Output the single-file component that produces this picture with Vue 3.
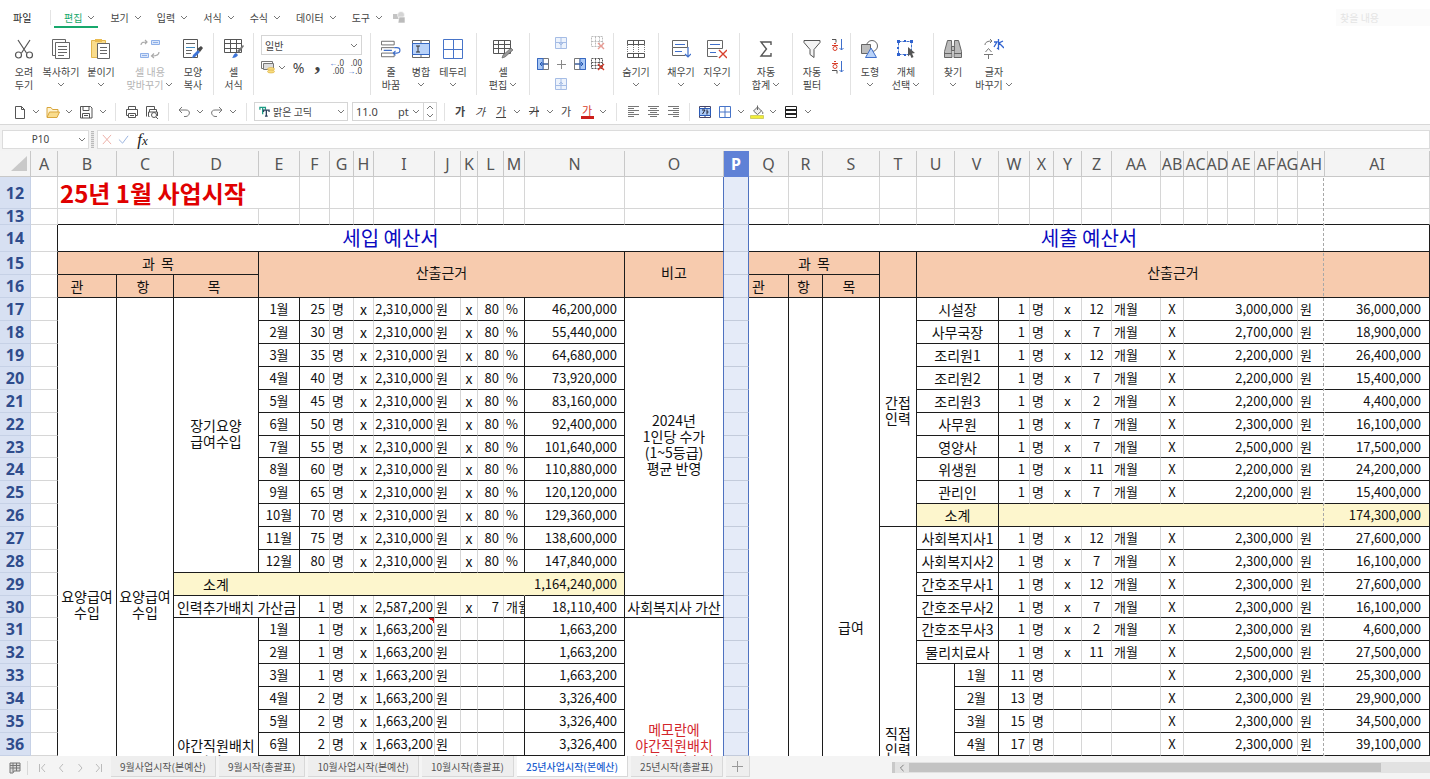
<script setup>
import { h } from 'vue'

const Chev = () =>
  h('svg', { class: 'chev', viewBox: '0 0 8 5', 'aria-hidden': 'true' }, [
    h('path', { d: 'M1 1 L4 4 L7 1', fill: 'none', stroke: '#777', 'stroke-width': '1' }),
  ])

const menus = ['편집', '보기', '입력', '서식', '수식', '데이터', '도구']

const columns = [
  ['A', 27], ['B', 59], ['C', 57], ['D', 85], ['E', 41], ['F', 30], ['G', 24], ['H', 20],
  ['I', 61], ['J', 26], ['K', 17], ['L', 26], ['M', 21], ['N', 100], ['O', 99], ['P', 25],
  ['Q', 40], ['R', 34], ['S', 57], ['T', 37], ['U', 38], ['V', 44], ['W', 31], ['X', 24],
  ['Y', 28], ['Z', 30], ['AA', 49], ['AB', 23], ['AC', 24], ['AD', 20], ['AE', 27],
  ['AF', 23], ['AG', 20], ['AH', 27], ['AI', 0],
]

const cell = (t = '', c = '', cs = 1, rs = 1) => ({ t, c, cs, rs })
const blanks = (n, c) => Array.from({ length: n }, () => cell('', c))

const income = [
  [25, '46,200,000'], [30, '55,440,000'], [35, '64,680,000'], [40, '73,920,000'],
  [45, '83,160,000'], [50, '92,400,000'], [55, '101,640,000'], [60, '110,880,000'],
  [65, '120,120,000'], [70, '129,360,000'], [75, '138,600,000'], [80, '147,840,000'],
]
const night = [
  [1, '1,663,200'], [1, '1,663,200'], [1, '1,663,200'],
  [2, '3,326,400'], [2, '3,326,400'], [2, '3,326,400'],
]
const staff = {
  17: ['시설장', 12, '3,000,000', '36,000,000'],
  18: ['사무국장', 7, '2,700,000', '18,900,000'],
  19: ['조리원1', 12, '2,200,000', '26,400,000'],
  20: ['조리원2', 7, '2,200,000', '15,400,000'],
  21: ['조리원3', 2, '2,200,000', '4,400,000'],
  22: ['사무원', 7, '2,300,000', '16,100,000'],
  23: ['영양사', 7, '2,500,000', '17,500,000'],
  24: ['위생원', 11, '2,200,000', '24,200,000'],
  25: ['관리인', 7, '2,200,000', '15,400,000'],
  27: ['사회복지사1', 12, '2,300,000', '27,600,000'],
  28: ['사회복지사2', 7, '2,300,000', '16,100,000'],
  29: ['간호조무사1', 12, '2,300,000', '27,600,000'],
  30: ['간호조무사2', 7, '2,300,000', '16,100,000'],
  31: ['간호조무사3', 2, '2,300,000', '4,600,000'],
  32: ['물리치료사', 11, '2,500,000', '27,500,000'],
}
const carers = [
  [11, '25,300,000'], [13, '29,900,000'], [15, '34,500,000'], [17, '39,100,000'],
]

function leftCells(r) {
  const out = []
  if (r === 17) {
    out.push(cell('요양급여\n수입', 'lab bk rk', 1, 27), cell('요양급여\n수입', 'lab bk rk', 1, 27))
    out.push(cell('장기요양\n급여수입', 'lab bk rk', 1, 12))
  }
  if (r <= 28) {
    const [n, sum] = income[r - 17]
    out.push(
      cell(`${r - 16}월`, 'c bk rk'), cell(n, 'r5 bk'), cell('명', 'l bk'), cell('x', 'x bk'),
      cell('2,310,000', 'r2 bk'), cell('원', 'l1 bk'), cell('x', 'x bk'), cell(80, 'r4 bk'),
      cell('%', 'l bk rk'), cell(sum, 'r7 bk rk'),
    )
    if (r === 17) out.push(cell('2024년\n1인당 수가\n(1~5등급)\n평균 반영', 'lab bk blue', 1, 13))
  } else if (r === 29) {
    out.push(cell('소계', 'lab bk nr yel'), cell('', 'bk nr yel', 9), cell('1,164,240,000', 'r7 bk rk yel'))
  } else if (r === 30) {
    out.push(
      cell('인력추가배치 가산금', 'lab bk rk', 2), cell(1, 'r5 bk'), cell('명', 'l bk'), cell('x', 'x bk'),
      cell('2,587,200', 'r2 bk'), cell('원', 'l1 bk'), cell('x', 'x bk'), cell(7, 'r4 bk'),
      cell('개월', 'l clip bk rk'), cell('18,110,400', 'r7 bk rk'), cell('사회복지사 가산', 'lab bk blue'),
    )
  } else if (r <= 42) {
    if (r === 31) out.push(cell('야간직원배치\n가산금', 'lab bk rk', 1, 12))
    const d = night[r - 31]
    if (d) {
      out.push(
        cell(`${r - 30}월`, 'c bk rk'), cell(d[0], 'r5 bk'), cell('명', 'l bk'), cell('x', 'x bk'),
        cell('1,663,200', r === 31 ? 'r2 bk memo' : 'r2 bk'), cell('원', 'l1 bk'),
        ...blanks(2, 'bk'), cell('', 'bk rk'), cell(d[1], 'r7 bk rk'),
      )
    } else {
      out.push(cell('', 'bk rk'), ...blanks(7, 'bk'), cell('', 'bk rk'), cell('', 'bk rk'))
    }
    if (r === 31) out.push(cell('메모란에\n야간직원배치\n가산금 산출식\n\u00a0', 'lab red bk blue', 1, 12))
  } else if (r === 43) {
    out.push(cell('', 'bk', 11), cell('', 'bk blue'))
  } else {
    out.push(cell('', 'bk', 13), cell('', 'bk blue'))
  }
  return out
}

function rightCells(r) {
  const out = []
  if (r === 17) {
    out.push(cell('', 'rk bk', 1, 29), cell('', 'rk bk', 1, 29), cell('급여', 'lab rk bk', 1, 29))
    out.push(cell('간접\n인력', 'lab rk bk', 1, 10))
  }
  if (r === 27) out.push(cell('직접\n인력', 'lab rk bk', 1, 19))
  if (r === 26) {
    out.push(cell('소계', 'lab bk rk yel', 2), cell('', 'bk nr yel', 12), cell('174,300,000', 'r8 bk rk yel'))
  } else if (staff[r]) {
    const [name, months, pay, sum] = staff[r]
    out.push(
      cell(name, 'lab bk rk', 2), cell(1, 'r5 bk'), cell('명', 'l bk'), cell('x', 'c bk'),
      cell(months, 'c bk'), cell('개월', 'l bk'), cell('X', 'c bk'), cell(pay, 'r4 bk', 5),
      cell('원', 'l bk nr'), cell(sum, 'r8 bk rk'),
    )
  } else {
    if (r === 33) out.push(cell('', 'bk rk', 1, 13))
    const d = carers[r - 33]
    out.push(
      cell(d ? `${r - 32}월` : '', 'c bk rk'), cell(d ? d[0] : '', 'r5 bk'), cell(d ? '명' : '', 'l bk'),
      ...blanks(3, 'bk'), cell(d ? 'X' : '', 'c bk'), cell(d ? '2,300,000' : '', 'r4 bk', 5),
      cell(d ? '원' : '', 'l bk nr'), cell(d ? d[1] : '', 'r8 bk rk'),
    )
  }
  return out
}

const rows = [
  {
    n: 12, k: 'h12',
    cells: [cell(), cell('25년 1월 사업시작', 'headline', 4), ...blanks(9), cell('', 'blue'), cell('', 'sel'),
      ...blanks(17), cell('', 'nr'), cell()],
  },
  {
    n: 13, k: 'h13',
    cells: [cell(), ...blanks(13, 'bk'), cell('', 'bk blue'), cell('', 'sel'),
      ...blanks(17, 'bk'), cell('', 'bk nr'), cell('', 'bk')],
  },
  {
    n: 14, k: 'h14',
    cells: [cell('', 'rk'), cell('세입 예산서', 'title bk blue', 14), cell('', 'sel'), cell('세출 예산서', 'title bk rk', 19)],
  },
  {
    n: 15, k: '',
    cells: [cell('', 'rk'), cell('과\u00a0\u00a0목', 'lab bk rk hd', 3), cell('산출근거', 'lab bk rk hd', 10, 2),
      cell('비고', 'lab bk blue hd', 1, 2), cell('', 'sel'), cell('과\u00a0\u00a0목', 'lab bk rk hd', 3),
      cell('', 'bk rk hd', 1, 2), cell('산출근거', 'lab bk rk hd', 15, 2)],
  },
  {
    n: 16, k: '',
    cells: [cell('', 'rk'), cell('관', 'lab bk rk hd in'), cell('항', 'lab bk rk hd in2'), cell('목', 'lab bk rk hd in2'),
      cell('', 'sel'), cell('관', 'lab bk rk hd in'), cell('항', 'lab bk rk hd in2'), cell('목', 'lab bk rk hd in2')],
  },
]
for (let r = 17; r <= 45; r++) {
  rows.push({
    n: r <= 36 ? r : '',
    k: (r - 16) % 7 === 0 ? 'h22' : '',
    cells: [cell('', 'rk'), ...leftCells(r), cell('', 'sel'), ...rightCells(r)],
  })
}

const sheets = [
  '9월사업시작(본예산)', '9월시작(총괄표)', '10월사업시작(본예산)', '10월시작(총괄표)',
  '25년사업시작(본예산)', '25년시작(총괄표)',
]
const activeSheet = 4
</script>

<template>
  <div class="app">
    <nav class="menu" aria-label="메뉴">
      <button class="file">파일</button>
      <span class="msep"></span>
      <button v-for="(m, i) in menus" :key="m" class="mitem" :class="{ on: i === 0 }">{{ m }}<Chev /></button>
      <svg class="mini" viewBox="0 0 14 12"><rect x="1" y="3" width="6" height="5" fill="#c4c4c4" /><circle cx="9" cy="4" r="3.5" fill="#d4d4d4" stroke="#fff" stroke-width=".6" /><path d="M7 6h6v6H6z" fill="#bbb" stroke="#fff" stroke-width=".6" /></svg>
      <input class="find" type="search" placeholder="찾을 내용" aria-label="찾을 내용" />
    </nav>

    <div class="ribbon">
      <div class="grp g1">
        <button class="big w40">
          <svg viewBox="0 0 20 20"><g fill="none" stroke="#555" stroke-width="1.2"><path d="M4 1 12.500 14M16 1 7.500 14" /><circle cx="4.500" cy="16" r="3" /><circle cx="15.500" cy="16" r="3" /></g></svg>
          <span>오려</span><span>두기</span>
        </button>
        <button class="big w34">
          <svg viewBox="0 0 20 20"><g fill="#fff" stroke="#666"><path d="M1.500 .5h13v16h-13z" /><path d="M4.500 3.500h14v16h-14z" /><path d="M7 7.500h9M7 10.500h9M7 13.500h9M7 16.500h6" /></g></svg>
          <span>복사하기</span><Chev />
        </button>
        <button class="big w46">
          <svg viewBox="0 0 20 20"><path d="M.5 1.500h14v17H.5z" fill="#f9dc8c" stroke="#e2b64c" /><path d="M4 0h7v3H4z" fill="#eabb4e" /><path d="M6.500 4.500h12v15h-12z" fill="#fff" stroke="#666" /><path d="M9 8.500h7M9 11.500h7M9 14.500h7" stroke="#666" /></svg>
          <span>붙이기</span><Chev />
        </button>
        <button class="big w52 off" disabled>
          <svg viewBox="0 0 20 20"><g fill="none" stroke="#aaa" stroke-width="1.200"><path d="M1 6C1 3 4 3 7 3M5 1l2 2-2 2M19 13c0 3-2 4-7 4M14 14.500L11.500 17l2.500 2" /></g><g fill="#dbe7fa" stroke="#8fb0e8"><path d="M11.500 1.500h8v4h-8zM.5 14.500h8v4h-8z" /><path d="M13 3.500h5M2 16.500h5" /></g></svg>
          <span>셀 내용</span><span class="row">맞바꾸기<Chev /></span>
        </button>
        <button class="big w34">
          <svg viewBox="0 0 20 20"><path d="M.5 .5h14v18H.5z" fill="#fff" stroke="#555" /><path d="M3 4.500h9M3 11.500h6M3 14.500h5" stroke="#666" /><path d="M3 8.500h9" stroke="#3f8ac0" /><path d="M9 19l1-3 5-5 2 2-5 5z" fill="#3d74d8" /><path d="M14 10l4-3 2 2-3 4z" fill="#4a4a4a" /></svg>
          <span>모양</span><span>복사</span>
        </button>
      </div>
      <div class="grp">
        <button class="big w39">
          <svg viewBox="0 0 20 20"><path d="M.5 .5h17v13H.5zM.5 4.500h17M.5 9.500h17M6.500 .5v13M12.500 .5v13" fill="none" stroke="#555" /><path d="M13 12l6-6 1 1-5 7z" fill="#777" /><path d="M8 19c1 0 1-4 4-5l2 2c-1 2-3 3-6 3z" fill="#3d74d8" /></svg>
          <span>셀</span><span>서식</span>
        </button>
      </div>
      <div class="grp gfmt">
        <div class="selwrap">
          <select aria-label="표시 형식"><option>일반</option></select><Chev />
        </div>
        <div class="fmt">
          <button aria-label="통화"><svg viewBox="0 0 14 13" width="14" height="13"><path d="M.5.500h11v7H.5z" fill="#fff" stroke="#777" /><path d="M2.500 2.500h10v6h-10z" fill="#ddd" stroke="#777" /><ellipse cx="10" cy="8" rx="3.500" ry="1.500" fill="#f8dc80" stroke="#d8ac3c" stroke-width=".6" /><ellipse cx="10" cy="10.500" rx="3.500" ry="1.500" fill="#f8dc80" stroke="#d8ac3c" stroke-width=".6" /></svg></button>
          <Chev />
          <button class="pct" aria-label="백분율">%</button>
          <button class="comma" aria-label="쉼표">,</button>
          <button class="dec" aria-label="자릿수 늘림"><span><i>←</i>.0</span><span>.00</span></button>
          <button class="dec" aria-label="자릿수 줄임"><span>.00</span><span><i>→</i>.0</span></button>
        </div>
      </div>
      <div class="grp g4">
        <button class="big w40">
          <svg viewBox="0 0 22 20"><path d="M.5 1.500h14v4H.5zM.5 8.500h14M.5 18.500h14v-4H.5zM.5 8.500v3" fill="none" stroke="#666" /><path d="M14.500 8.500h3c4.500 0 4.500 6 0 6h-4M16 12l-2.500 2.500L16 17M3 11.500h9" fill="none" stroke="#3f6fcb" stroke-width="1.200" /></svg>
          <span>줄</span><span>바꿈</span>
        </button>
        <button class="big w20">
          <svg viewBox="0 0 20 20"><path d="M1.500 1.500h17v17h-17zM10 1.500v3M10 15.500v3" fill="#fff" stroke="#666" /><path d="M1.500 4.500h17v11h-17z" fill="#b9d2f8" stroke="#3668c2" /><path d="M5 7h4M7 7v6M5 13h4" stroke="#333" fill="none" /></svg>
          <span>병합</span><Chev />
        </button>
        <button class="big w44">
          <svg viewBox="0 0 20 20"><path d="M.5.500h19v19H.5zM10.500 .5v19M.5 10.500h19" fill="#fff" stroke="#4774c8" /></svg>
          <span>테두리</span><Chev />
        </button>
      </div>
      <div class="grp">
        <button class="big w52">
          <svg viewBox="0 0 20 20"><path d="M.5 1.500h17v13H.5zM.5 5.500h17M.5 9.500h17M5.500 1.500v13M11.500 1.500v13" fill="none" stroke="#555" /><path d="M9 19l1-3 8-7 2 2-8 7z" fill="#999" stroke="#555" stroke-width=".6" /></svg>
          <span>셀</span><span class="row">편집<Chev /></span>
        </button>
      </div>
      <div class="grp ins">
        <button class="p2 dim" aria-label="위에 줄 추가"><svg viewBox="0 0 12 12"><path d="M.5.500h11v11H.5zM.5 5.500h11M6 5v6" fill="#dce8fb" stroke="#4e7ccc" /><path d="M6 1v7M4 6l2 2 2-2" stroke="#4e7ccc" fill="none" /></svg></button>
        <button class="p3 dim" aria-label="줄 지우기"><svg viewBox="0 0 14 14"><path d="M.5.500h11v10H.5zM.5 5.500h11M4.500.500v10M8.500.500v10" fill="none" stroke="#777" stroke-dasharray="2 1" /><path d="M7 7l6 6M13 7l-6 6" stroke="#d43a2a" stroke-width="1.400" /></svg></button>
        <button class="p4" aria-label="왼쪽에 칸 추가"><svg viewBox="0 0 12 12"><path d="M.5.500h11v11H.5zM6 .5v11M6 6h5" fill="#fff" stroke="#777" /><path d="M.5.500H6v11H.5z" fill="#a9c8f5" stroke="#3668c2" /><path d="M11 6H3M5 4L3 6l2 2" stroke="#2456b0" fill="none" /></svg></button>
        <span class="p5"><svg viewBox="0 0 12 12"><path d="M6.500 2v9M2 6.500h9" stroke="#888" /></svg></span>
        <button class="p6" aria-label="오른쪽에 칸 추가"><svg viewBox="0 0 12 12"><path d="M.5.500h11v11H.5zM6 .5v11M.5 6H6" fill="#fff" stroke="#777" /><path d="M6 .5h5.500v11H6z" fill="#a9c8f5" stroke="#3668c2" /><path d="M1 6h8M7 4l2 2-2 2" stroke="#2456b0" fill="none" /></svg></button>
        <button class="p7" aria-label="칸 지우기"><svg viewBox="0 0 14 14"><path d="M.5 1.500h11v10H.5zM.5 5.500h11M.5 8.500h11M4.500 1.500v10M8.500 1.500v10" fill="none" stroke="#555" stroke-dasharray="2 1" /><path d="M7 7l6 6M13 7l-6 6" stroke="#d43a2a" stroke-width="1.400" /></svg></button>
        <button class="p8 dim" aria-label="아래에 줄 추가"><svg viewBox="0 0 12 12"><path d="M.5.500h11v11H.5zM.5 7.500h11M6 .5v6" fill="#dce8fb" stroke="#4e7ccc" /><path d="M6 11V4M4 6l2-2 2 2" stroke="#4e7ccc" fill="none" /></svg></button>
      </div>
      <div class="grp">
        <button class="big w44">
          <svg viewBox="0 0 20 20"><path d="M1.500 1.500h17v4h-17zM1.500 14.500h17v4h-17zM7.500 1.500v4M12.500 1.500v4M7.500 14.500v4M12.500 14.500v4" fill="none" stroke="#555" /><path d="M1.500 6v8M7.500 6v8M12.500 6v8M18.500 6v8" stroke="#777" stroke-dasharray="1 1" /></svg>
          <span>숨기기</span><Chev />
        </button>
      </div>
      <div class="grp g8">
        <button class="big w44">
          <svg viewBox="0 0 20 20"><path d="M1.500 1.500h15v7h-15zM1.500 8.500v8h13" fill="#fff" stroke="#666" /><path d="M4 5.500h10M4 12.500h7" stroke="#3f6fcb" /><path d="M17 8v10M14 15l3 3 3-3" fill="none" stroke="#3f6fcb" stroke-width="1.200" /></svg>
          <span>채우기</span><Chev />
        </button>
        <button class="big w28">
          <svg viewBox="0 0 20 20"><path d="M.5 1.500h15v8H.5zM.5 9.500v8h10" fill="#fff" stroke="#666" /><path d="M3 5.500h10M3 13.500h6" stroke="#3f6fcb" /><path d="M12 11l8 8M20 11l-8 8" stroke="#d8402c" stroke-width="1.400" /></svg>
          <span>지우기</span><Chev />
        </button>
      </div>
      <div class="grp">
        <button class="big w52">
          <svg viewBox="0 0 20 20"><path d="M15 6V3H5l5.500 7L5 17h10v-3" fill="none" stroke="#555" stroke-width="1.400" /></svg>
          <span>자동</span><span class="row">합계<Chev /></span>
        </button>
      </div>
      <div class="grp g10">
        <button class="big w38">
          <svg viewBox="0 0 20 20"><path d="M2 1.500h16v2l-6 7v8l-4-3v-5L2 3.500z" fill="#f4f4f4" stroke="#555" /></svg>
          <span>자동</span><span>필터</span>
        </button>
        <div class="sorts">
          <button aria-label="오름차순 정렬"><svg viewBox="0 0 14 14"><path d="M1 1.500h4v3" fill="none" stroke="#555" /><path d="M1 7.500h6M3 5.500h2" stroke="#d8402c" /><circle cx="4" cy="10.500" r="2" fill="none" stroke="#d8402c" /><path d="M10.500 1v11M8.500 10l2 2 2-2" fill="none" stroke="#3f6fcb" /></svg></button>
          <button aria-label="내림차순 정렬"><svg viewBox="0 0 14 14"><path d="M1 3.500h6M3 1.500h2" stroke="#d8402c" /><circle cx="4" cy="6.500" r="2" fill="none" stroke="#d8402c" /><path d="M1 10.500h5v3" fill="none" stroke="#555" /><path d="M10.500 1v11M8.500 10l2 2 2-2" fill="none" stroke="#3f6fcb" /></svg></button>
        </div>
      </div>
      <div class="grp g11">
        <button class="big w38">
          <svg viewBox="0 0 20 20"><circle cx="12" cy="7" r="5.500" fill="#fff" stroke="#666" /><path d="M1.500 5.500h9v9h-9z" fill="#bdbdbd" stroke="#666" /><path d="M11 9l5.500 9.500h-11z" fill="#b9d2f8" stroke="#3f6fcb" /></svg>
          <span>도형</span><Chev />
        </button>
        <button class="big w34">
          <svg viewBox="0 0 20 20"><path d="M2.500 2.500h13v13h-13z" fill="none" stroke="#3f6fcb" stroke-dasharray="3 1" /><g fill="#2f62d0"><path d="M1 1h3v3H1zM14 1h3v3h-3zM1 14h3v3H1zM8 1h2v2H8zM1 8h2v2H1zM8 15h2v2H8z" /></g><path d="M12 8l7 6-3 .5 1.500 3.500-2 1-1.500-3.500-2 2z" fill="#555" /></svg>
          <span>개체</span><span class="row">선택<Chev /></span>
        </button>
      </div>
      <div class="grp g12">
        <button class="big w38">
          <svg viewBox="0 0 20 20"><g fill="#bbb" stroke="#666"><path d="M4.500 1.500h4l.5 17H1.500v-6z" /><path d="M15.500 1.500h-4l-.5 17h7.500v-6z" /><path d="M8.500 7.500h3v4h-3z" /><path d="M1.500 14.500H9M11 14.500h7.500" /></g></svg>
          <span>찾기</span><Chev />
        </button>
        <button class="big w44">
          <svg viewBox="0 0 20 20"><path d="M1 6c0-3 3-4 7-4M6 0l2 2-2 2M4.500 9.500L1.500 13M4.500 9.500l3 3.500M0 15.500h9M4.500 15.500V20" fill="none" stroke="#777" /><path d="M14.500 0v10l-1.500-1M10 3h3l-3 5M19 2l-4 2 5 5" fill="none" stroke="#2f62d0" stroke-width="1.300" /></svg>
          <span>글자</span><span class="row">바꾸기<Chev /></span>
        </button>
      </div>
    </div>

    <div class="tools">
      <button aria-label="새 문서"><svg viewBox="0 0 14 14"><path d="M2.500 1.500h6l3 3v9h-9zM8.500 1.500v3h3" fill="#fff" stroke="#555" /></svg></button><Chev />
      <button aria-label="열기"><svg viewBox="0 0 14 14"><path d="M1 12V2.500h4l1.500 2H12V7" fill="#fff3cf" stroke="#d9a63c" /><path d="M1 12.500L3.500 7h10L11 12.500z" fill="#f9dc8c" stroke="#d9a63c" /></svg></button><Chev />
      <button aria-label="저장"><svg viewBox="0 0 14 14"><path d="M1.500 1.500h10l1.500 1.500v10H1.500zM4 1.500v4h6v-4M3.500 13V8.500h7V13M5 10.500h4" fill="none" stroke="#555" /></svg></button><Chev />
      <i class="sep"></i>
      <button aria-label="인쇄"><svg viewBox="0 0 14 14"><path d="M3.500 4.500v-3h7v3M3.500 10.500h-2v-6h11v6h-2M3.500 8.500h7v4h-7zM5 10.500h4" fill="none" stroke="#555" /></svg></button>
      <button aria-label="미리 보기"><svg viewBox="0 0 14 14"><path d="M1.500 11.500V1.500h8v3M4.500 7V4.500h7V7M4.500 11.500h-1V7h9v4" fill="none" stroke="#555" /><circle cx="9" cy="10" r="2.500" fill="#fff" stroke="#555" /><path d="M11 12l2 2" stroke="#555" /></svg></button>
      <i class="sep"></i>
      <button aria-label="되돌리기"><svg viewBox="0 0 14 14"><path d="M5 2L2 5l3 3M2 5h7c5 0 4 6 0 6.500H7" fill="none" stroke="#777" /></svg></button><Chev />
      <button aria-label="다시 실행"><svg viewBox="0 0 14 14"><path d="M9 2l3 3-3 3M12 5H5c-5 0-4 6 0 6.500h2" fill="none" stroke="#777" /></svg></button><Chev />
      <i class="sep"></i>
      <div class="fontbox">
        <svg viewBox="0 0 12 12"><path d="M1 4V1.500h6V4M4 1.500V9" fill="none" stroke="#1c9c84" stroke-width="1.400" /><path d="M5 6.500V4.500h6v2M8 4.500V11M6.500 11h3" fill="none" stroke="#2b3f5c" stroke-width="1.400" /></svg>
        <select aria-label="글꼴"><option>맑은 고딕</option></select><Chev />
      </div>
      <div class="sizebox">
        <input type="text" value="11.0" aria-label="글자 크기" /><span>pt</span><Chev />
        <div class="spin"><button aria-label="크게"><Chev class="up" /></button><button aria-label="작게"><Chev /></button></div>
      </div>
      <i class="sep"></i>
      <button class="ga b">가</button>
      <button class="ga it">가</button>
      <button class="ga u">가</button><Chev />
      <button class="ga s">가</button><Chev />
      <button class="ga">가</button>
      <button class="ga red">가</button><Chev />
      <i class="sep"></i>
      <button aria-label="왼쪽 정렬"><svg viewBox="0 0 14 14"><path d="M2 1.500h11M2 3.500h6M2 5.500h11M2 7.500h6M2 9.500h11M2 11.500h6" stroke="#777" /></svg></button>
      <button aria-label="가운데 정렬"><svg viewBox="0 0 14 14"><path d="M2 1.500h11M4 3.500h7M2 5.500h11M4 7.500h7M2 9.500h11M4 11.500h7" stroke="#777" /></svg></button>
      <button aria-label="오른쪽 정렬"><svg viewBox="0 0 14 14"><path d="M2 1.500h11M7 3.500h6M2 5.500h11M7 7.500h6M2 9.500h11M7 11.500h6" stroke="#777" /></svg></button>
      <i class="sep"></i>
      <button aria-label="병합하고 가운데 맞춤"><svg viewBox="0 0 14 14"><path d="M1.500 1.500h11v11h-11zM7 1v2M7 11v2" fill="#fff" stroke="#446" /><path d="M1.500 3.500h11v7h-11z" fill="#a9c8f5" stroke="#2a5ab8" /><path d="M4 5h3L4.500 9M9 4.500v5M9 7h1.500" fill="none" stroke="#223" /></svg></button>
      <button aria-label="테두리"><svg viewBox="0 0 14 14"><path d="M1.500 1.500h11v11h-11zM7 1.500v11M1.500 7h11" fill="#fff" stroke="#4774c8" /></svg></button><Chev />
      <button aria-label="채우기 색"><svg viewBox="0 0 14 14"><path d="M3.500 6l4-4 4 4-4 3.500zM7.500 5V.5M11.500 6c1.500 1 1.500 2 1 3" fill="#eee" stroke="#666" /><path d="M.5 10.500h13v3H.5z" fill="#f0ee3a" stroke="#b8b43a" stroke-width=".6" /></svg></button><Chev />
      <button aria-label="선 모양"><svg viewBox="0 0 14 14"><path d="M1.500 1.500h11v11h-11z" fill="#fff" stroke="#222" /><path d="M1 5h12M1 9h12" stroke="#222" stroke-width="2" /></svg></button><Chev />
    </div>

    <div class="formula">
      <div class="namebox"><input type="text" value="P10" aria-label="셀 이름" /><Chev /></div>
      <span class="grip"></span>
      <div class="fx">
        <button aria-label="취소"><svg viewBox="0 0 12 12"><path d="M2 1l9 10M11 1L2 11" stroke="#eba9a0" /></svg></button>
        <button aria-label="입력"><svg viewBox="0 0 12 12"><path d="M1 6l4 4 6-8" fill="none" stroke="#93aedd" /></svg></button>
        <button class="fxb" aria-label="함수"><em>f</em><em class="fxx">x</em></button>
        <input type="text" aria-label="수식" />
      </div>
    </div>

    <div class="sheet">
      <table>
        <colgroup>
          <col :style="{ width: '31px' }" />
          <col v-for="c in columns" :key="c[0]" :style="c[1] ? { width: c[1] + 'px' } : {}" />
        </colgroup>
        <thead>
          <tr>
            <th class="corner"><svg viewBox="0 0 16 16"><path d="M16 0v15H0z" fill="#c9c9c9" /></svg></th>
            <th v-for="c in columns" :key="c[0]" scope="col" :class="{ psel: c[0] === 'P' }"><span>{{ c[0] }}</span></th>
          </tr>
        </thead>
        <tbody>
          <tr v-for="(row, i) in rows" :key="i" :class="row.k">
            <th scope="row">{{ row.n }}</th>
            <td v-for="(c, j) in row.cells" :key="j" :class="[c.c, { tall: c.rs > 1 }]" :colspan="c.cs" :rowspan="c.rs">{{ c.t }}</td>
          </tr>
        </tbody>
      </table>
      <div class="pagebreak"></div>
    </div>

    <footer class="bottom">
      <button class="list" aria-label="시트 목록"><svg viewBox="0 0 12 12"><path d="M1 1h10v8H5l-1 2H1z" fill="#ddd" stroke="#777" /><path d="M1 3.500h10M1 6h10M4 1v9M7.500 1v8" stroke="#777" /></svg></button>
      <i class="bsep"></i>
      <button class="nav" aria-label="처음"><svg viewBox="0 0 10 10"><path d="M2.500 1v8M8 1L4.500 5 8 9" /></svg></button>
      <button class="nav" aria-label="이전"><svg viewBox="0 0 10 10"><path d="M7 1L3.500 5 7 9" /></svg></button>
      <button class="nav" aria-label="다음"><svg viewBox="0 0 10 10"><path d="M3.500 1L7 5 3.500 9" /></svg></button>
      <button class="nav" aria-label="끝"><svg viewBox="0 0 10 10"><path d="M2 1l3.500 4L2 9M7.500 1v8" /></svg></button>
      <div class="tabs">
        <button v-for="(s, i) in sheets" :key="s" class="tab" :class="{ on: i === activeSheet }">{{ s }}</button>
        <button class="tab add" aria-label="시트 추가"><svg viewBox="0 0 11 11"><path d="M5.500 0v11M0 5.500h11" stroke="#999" /></svg></button>
      </div>
      <div class="hscroll">
        <button aria-label="왼쪽으로"><svg viewBox="0 0 10 10"><path d="M7 1L3 5l4 4" fill="none" stroke="#666" /></svg></button>
        <div class="thumb"></div>
      </div>
    </footer>
  </div>
</template>

<style>
html,
body {
  background: #fff;
}
</style>

<style scoped>
.app {
  height: 100vh;
  display: flex;
  flex-direction: column;
  overflow: hidden;
  font-family: 'Noto Sans CJK KR', 'Noto Sans', sans-serif;
  font-size: 10px;
  line-height: 13px;
  color: #444;
}
button {
  font: inherit;
  color: inherit;
  background: none;
  border: 0;
  padding: 0;
  margin: 0;
}
input,
select {
  font: inherit;
  color: inherit;
  background: none;
  border: 0;
  padding: 0;
  margin: 0;
  min-width: 0;
  appearance: none;
  outline: 0;
}
svg {
  display: block;
  flex: none;
}
.chev {
  width: 8px;
  height: 5px;
  justify-self: center;
}
.up {
  transform: rotate(180deg);
}

.menu {
  display: flex;
  align-items: center;
  gap: 2px;
  height: 20px;
  padding: 7px 0 6px 13px;
}
.file {
  width: 35px;
  text-align: left;
  color: #222;
}
.msep {
  width: 1px;
  height: 15px;
  margin-right: 1px;
  background: #e4e4e4;
}
.mitem {
  display: flex;
  align-items: center;
  gap: 5px;
  height: 22px;
  padding: 0 3px 0 10px;
  border: solid transparent;
  border-width: 2px 0;
}
.mitem.on {
  color: #17a86c;
  border-bottom-color: #17a86c;
}
.mini {
  width: 14px;
  height: 12px;
  margin-left: 4px;
}
.find {
  width: 94px;
  height: 17px;
  margin-left: auto;
  padding-left: 4px;
  background: #fbfbfb;
}
.find::placeholder {
  color: #e4e4e4;
  opacity: 1;
}

.ribbon {
  display: flex;
  height: 62px;
  padding-left: 4px;
}
.grp {
  display: flex;
  border-right: 1px solid #e2e2e2;
}
.g1 {
  padding-right: 3px;
}
.g4 {
  padding-right: 1px;
}
.g8 {
  padding-right: 8px;
}
.g11 {
  padding-right: 10px;
}
.g12 {
  border: 0;
}
.big {
  display: flex;
  flex-direction: column;
  align-items: center;
  padding-top: 6px;
  white-space: nowrap;
}
.big > svg:first-child {
  width: 20px;
  height: 20px;
  margin-bottom: 6px;
}
.big > .chev {
  margin-top: 4px;
}
.row {
  display: flex;
  align-items: center;
  gap: 2px;
}
.off {
  color: #b4b4b4;
}
.w20 { width: 20px; }
.w28 { width: 28px; }
.w34 { width: 34px; }
.w38 { width: 38px; }
.w39 { width: 39px; }
.w40 { width: 40px; }
.w44 { width: 44px; }
.w46 { width: 46px; }
.w52 { width: 52px; }
.gfmt {
  flex-direction: column;
  width: 101px;
  padding: 2px 8px 0 7px;
}
.selwrap {
  display: flex;
  align-items: center;
  height: 18px;
  padding: 0 3px;
  border: 1px solid #d5d5d5;
}
.selwrap select,
.fontbox select {
  flex: 1;
}
.fmt {
  display: grid;
  grid-template-columns: 14px 13px 21px 17px 18px 18px;
  align-items: center;
  height: 24px;
}
.pct {
  font: 14px 'Noto Sans', sans-serif;
}
.comma {
  font: bold 24px/10px 'Liberation Serif', serif;
  padding-bottom: 11px;
}
.dec {
  display: flex;
  flex-direction: column;
  align-items: flex-end;
  font: 8px/8px 'Noto Sans', sans-serif;
  white-space: nowrap;
}
.dec i {
  font-style: normal;
  color: #3f6fcb;
}
.ins {
  display: grid;
  grid-template-columns: 18px 18px 20px 16px;
  grid-template-rows: 20px 21px 20px;
  align-items: center;
  justify-items: center;
  width: 75px;
  padding: 0 4px;
}
.ins svg {
  width: 12px;
  height: 12px;
}
.ins .p3 svg,
.ins .p7 svg {
  width: 14px;
  height: 14px;
}
.p2 { grid-area: 1 / 2; }
.p3 { grid-area: 1 / 4; }
.p4 { grid-area: 2 / 1; }
.p5 { grid-area: 2 / 2; }
.p6 { grid-area: 2 / 3; }
.p7 { grid-area: 2 / 4; }
.p8 { grid-area: 3 / 2; }
.dim {
  opacity: 0.5;
}
.sorts {
  display: flex;
  flex-direction: column;
  gap: 8px;
  width: 19px;
  padding-top: 5px;
}
.sorts svg {
  width: 14px;
  height: 14px;
}

.tools {
  display: grid;
  grid-template-columns:
    20px 12px 22px 10px 24px 10px 14px 20px 20px 12px 20px 12px 22px 10px 16px 94px 89px
    14px 18px 22px 20px 12px 22px 10px 22px 20px 12px 14px 20px 20px 20px 12px 20px 20px
    12px 20px 12px 24px 10px;
  align-items: center;
  justify-items: center;
  height: 25px;
  padding: 4px 0 0 10px;
  border-bottom: 1px solid #d8d8d8;
}
.tools > button svg {
  width: 14px;
  height: 14px;
}
.sep {
  width: 1px;
  height: 18px;
  background: #e2e2e2;
}
.fontbox,
.sizebox {
  display: flex;
  align-items: center;
  box-sizing: border-box;
  height: 19px;
  border: 1px solid #d5d5d5;
}
.fontbox {
  width: 94px;
  gap: 3px;
  padding: 0 2px 0 4px;
}
.fontbox svg:first-child {
  width: 11px;
  height: 11px;
}
.sizebox {
  width: 85px;
  justify-self: end;
  padding-left: 3px;
  font-family: 'Noto Sans', sans-serif;
  font-size: 11px;
}
.sizebox input {
  width: 42px;
}
.sizebox span {
  width: 14px;
}
.spin {
  display: flex;
  flex-direction: column;
  justify-content: space-evenly;
  align-items: center;
  height: 100%;
  width: 12px;
  margin-left: auto;
  border-left: 1px solid #d5d5d5;
}
.ga {
  font-size: 11px;
}
.b { font-weight: bold; }
.it { font-style: italic; }
.u { text-decoration: underline; }
.s { text-decoration: line-through; }
.ga.red {
  width: 13px;
  color: #d8402c;
  line-height: 11px;
  border-bottom: 3px solid #cc1f1a;
}

.formula {
  display: flex;
  align-items: center;
  gap: 2px;
  height: 19px;
  padding: 5px 0 2px 2px;
  background: #f3f3f3;
}
.namebox,
.fx {
  display: flex;
  align-items: center;
  box-sizing: border-box;
  height: 19px;
  background: #fff;
  border: 1px solid #dcdcdc;
}
.namebox {
  width: 87px;
  padding-right: 2px;
}
.namebox input {
  flex: 1;
  text-align: center;
  font-family: 'Noto Sans', sans-serif;
}
.grip {
  width: 3px;
  height: 17px;
  margin-right: 1px;
  background: repeating-linear-gradient(#bbb 0 1px, #e4e4e4 1px 2px);
}
.fx {
  flex: 1;
  gap: 6px;
  padding-left: 3px;
}
.fx svg {
  width: 11px;
  height: 11px;
}
.fxb {
  width: 15px;
  font: 17px/15px 'Liberation Serif', serif;
  color: #222;
}
.fxx {
  font-size: 13px;
}
.fx input {
  flex: 1;
}

.sheet {
  position: relative;
  flex: 1;
  min-height: 0;
  overflow: hidden;
}
table {
  width: 100%;
  table-layout: fixed;
  border-collapse: separate;
  border-spacing: 0;
  font-size: 13px;
  line-height: 16px;
  color: #111;
}
th,
td {
  box-sizing: border-box;
  padding: 0;
  border: solid #d6d6d6;
  border-width: 0 1px 1px 0;
  white-space: nowrap;
}
td {
  white-space: pre;
}
tr {
  height: 23px;
}
thead tr {
  height: 26px;
}
.h12 { height: 32px; }
.h13 { height: 16px; }
.h14 { height: 27px; }
.h22 { height: 22px; }
.h13 th,
.h13 td {
  line-height: 13px;
}
thead th {
  font: 16px/22px 'Noto Sans', sans-serif;
  color: #555;
  background: #f4f4f4;
  border-color: #c8c8c8;
}
thead th span {
  display: flex;
  justify-content: center;
}
thead th.psel {
  background: #5f81d6;
  color: #fff;
  font-weight: bold;
  border-color: #5f81d6;
}
.corner svg {
  width: 16px;
  height: 16px;
  margin-left: 11px;
}
tbody th {
  font: bold 16px/16px 'Noto Sans', sans-serif;
  color: #2f4c8c;
  background: #d7e0f2;
  border-color: #c6d1e6;
}
.bk { border-bottom-color: #1c1c1c; }
.rk { border-right-color: #1c1c1c; }
.nr { border-right-color: transparent; }
.blue { border-right-color: #4f72c0; }
.sel {
  background: #e5ebf8;
  border-color: #c3cbdb;
  border-right-color: #4f72c0;
}
.c,
.x,
.lab,
.title {
  text-align: center;
}
.x {
  font-size: 14px;
}
.lab {
  font-size: 14px;
}
.tall { padding-bottom: 5px; }
.l { padding-left: 2px; }
.l1 { padding-left: 1px; }
.r2,
.r4,
.r5,
.r7,
.r8 {
  text-align: right;
}
.r2 { padding-right: 1px; }
.r4 { padding-right: 4px; }
.r5 { padding-right: 4px; }
.r7 { padding-right: 7px; }
.r8 { padding-right: 8px; }
.clip { overflow: hidden; }
.red { color: #d3262c; }
.yel { background: #fdf6cd; }
.yel.nr { border-right-color: #fdf6cd; }
.hd { background: #f7cbae; }
.in { padding-right: 20px; }
.in2 { padding-right: 4px; }
.memo {
  background: linear-gradient(45deg, transparent 50%, #d3161c 50%) top right / 5px 5px no-repeat;
}
.headline {
  padding-left: 2px;
  font-size: 24px;
  line-height: 28px;
  font-weight: bold;
  color: #e00000;
}
.title {
  font-size: 20px;
  line-height: 24px;
  color: #0a0ac0;
}
.pagebreak {
  position: absolute;
  top: 27px;
  bottom: 0;
  left: 1323px;
  border-left: 1px dashed #a8a8a8;
}

.bottom {
  display: flex;
  align-items: center;
  flex: none;
  height: 23px;
  background: #f4f4f4;
  color: #555;
}
.list {
  width: 18px;
  padding-left: 9px;
  box-sizing: content-box;
}
.list svg {
  width: 12px;
  height: 12px;
}
.bsep {
  width: 1px;
  height: 14px;
  margin-right: 4px;
  background: #d8d8d8;
}
.nav {
  width: 19px;
}
.nav svg {
  width: 10px;
  height: 10px;
  margin: 0 auto;
  fill: none;
  stroke: #bbb;
}
.tabs {
  display: flex;
  align-self: flex-start;
  gap: 3px;
  margin-left: 3px;
}
.tab {
  height: 21px;
  padding: 0 9px;
  border-right: 1px solid #d8d8d8;
  border-bottom: 1px solid #d8d8d8;
  background: #eee;
  white-space: nowrap;
}
.tab.on {
  background: #fff;
  color: #1d5fd0;
  font-weight: 500;
}
.tab.add {
  padding: 0 6px;
}
.add svg {
  width: 11px;
  height: 11px;
}
.hscroll {
  display: flex;
  align-items: center;
  flex: 0 1 535px;
  height: 11px;
  margin-left: auto;
  padding-right: 49px;
  box-sizing: border-box;
  background: #e2e2e2;
  box-shadow: -3px 0 #c9c9c9;
}
.hscroll button {
  width: 14px;
}
.hscroll svg {
  width: 8px;
  height: 8px;
  margin: 0 auto;
}
.thumb {
  flex: 1;
  height: 9px;
  background: #c3c3c3;
}
</style>
